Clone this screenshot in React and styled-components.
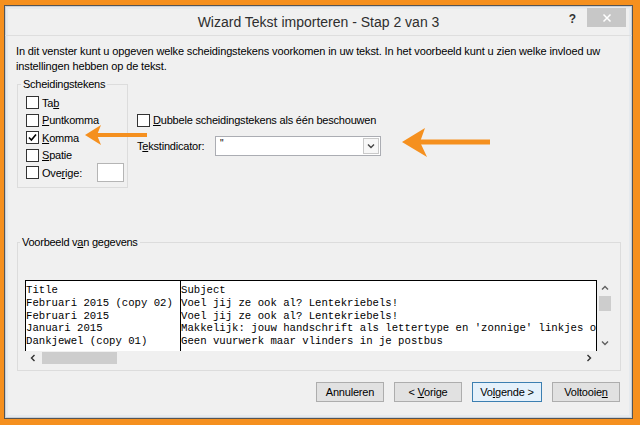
import React from "react";
import styled, { createGlobalStyle } from "styled-components";

// Wizard Tekst importeren - stap 2, scheidingstekens kiezen

const GlobalStyle = createGlobalStyle`
  html, body { margin: 0; padding: 0; }
  body {
    width: 640px;
    height: 425px;
    overflow: hidden;
    background: #f5901f;
    font-family: "Liberation Sans", Arial, sans-serif;
  }
`;

const Frame = styled.div`
  width: 640px;
  height: 425px;
  box-sizing: border-box;
  padding: 5px 7px 6px 4px;
  background: #f5901f;
`;

const Window = styled.div`
  position: relative;
  height: 100%;
  box-sizing: border-box;
  border: 1px solid #555;
  background: #f0f0f0;
  box-shadow: inset 0 0 0 1px #c9d0d8, inset 0 0 0 3px #e6eaee;
  display: flex;
  flex-direction: column;
  font-size: 11px;
  color: #000;
`;

const TitleBar = styled.div`
  height: 29px;
  border-bottom: 1px solid #dedede;
  display: grid;
  grid-template-columns: 1fr auto 1fr;
  align-items: start;
`;

const Title = styled.div`
  grid-column: 2;
  padding-top: 8px;
  font-size: 14px;
  color: #2e2e2e;
  white-space: nowrap;
`;

const TitleControls = styled.div`
  grid-column: 3;
  justify-self: end;
  display: flex;
  align-items: flex-start;
  gap: 11px;
  margin-right: 6px;
`;

const Help = styled.span`
  padding-top: 6px;
  font-size: 12px;
  font-weight: bold;
  color: #333;
`;

const CloseBtn = styled.div`
  width: 39px;
  height: 19px;
  margin-top: 2px;
  background: #c7c7c7;
  display: flex;
  align-items: center;
  justify-content: center;
`;

const Body = styled.div`
  flex: 1;
  padding: 0 12px 0 11px;
  display: flex;
  flex-direction: column;
`;

const Intro = styled.p`
  margin: 8px 0 0;
  line-height: 15px;
  white-space: nowrap;
  letter-spacing: -0.13px;
`;

const TopRow = styled.div`
  display: flex;
  align-items: flex-start;
  margin-top: 3px;
`;

const Group = styled.fieldset`
  margin: 0 0 0 1px;
  box-sizing: border-box;
  width: ${(p) => p.$w}px;
  border: 1px solid #dcdcdc;
  padding: ${(p) => p.$pad};
  min-width: 0;
`;

const Legend = styled.legend`
  margin-left: -5px;
  padding: 0 2px;
  line-height: 14px;
  letter-spacing: -0.25px;
`;

const CheckRow = styled.div`
  height: 17.5px;
  display: flex;
  align-items: center;
  gap: 3px;
  letter-spacing: -0.2px;
  white-space: nowrap;
`;

const Box = styled.span`
  width: 13px;
  height: 13px;
  box-sizing: border-box;
  border: 1px solid #333;
  background: #fff;
  display: inline-flex;
  align-items: center;
  justify-content: center;
  flex: none;
`;

const SmallInput = styled.span`
  width: 27px;
  height: 19px;
  box-sizing: border-box;
  margin-left: 12px;
  border: 1px solid #b5b5b5;
  background: #fff;
  flex: none;
`;

const Middle = styled.div`
  margin-left: 9px;
  padding-top: 34.5px;
  display: flex;
  flex-direction: column;
`;

const IndicatorRow = styled.div`
  margin-top: 6.5px;
  height: 20px;
  display: flex;
  align-items: center;
  letter-spacing: -0.2px;
`;

const IndicatorLabel = styled.span`
  width: 78px;
`;

const Combo = styled.div`
  width: 166px;
  height: 20px;
  box-sizing: border-box;
  border: 1px solid #abadb3;
  background: #fff;
  display: flex;
  align-items: center;
`;

const ComboValue = styled.span`
  flex: 1;
  padding-left: 4px;
  font-size: 10px;
  align-self: flex-start;
  padding-top: 1px;
`;

const ComboBtn = styled.span`
  width: 16px;
  height: 16px;
  margin-right: 1px;
  box-sizing: border-box;
  border: 1px solid #c9c9c9;
  background: #f7f7f7;
  display: flex;
  align-items: center;
  justify-content: center;
`;

const PreviewGroup = styled(Group)`
  margin-top: 47px;
`;

const Preview = styled.div`
  display: grid;
  grid-template-columns: 572px 15px;
  grid-template-rows: 71px 14px;
`;

const Table = styled.div`
  box-sizing: border-box;
  border: 1px solid #000;
  border-bottom: none;
  background: #fff;
  display: flex;
  overflow: hidden;
  font-family: "Liberation Mono", "Courier New", monospace;
  font-size: 10.65px;
  line-height: 12.75px;
`;

const Column = styled.div`
  width: ${(p) => (p.$w ? `${p.$w}px` : "auto")};
  flex: ${(p) => (p.$w ? "none" : "1")};
  border-left: ${(p) => (p.$divider ? "1px solid #000" : "none")};
  padding-top: 3px;
  white-space: pre;
  overflow: hidden;
`;

const VScroll = styled.div`
  display: flex;
  flex-direction: column;
  align-items: center;
`;

const HScroll = styled.div`
  display: flex;
  align-items: center;
`;

const ScrollBtn = styled.span`
  width: ${(p) => (p.$v ? "15px" : "16px")};
  height: ${(p) => (p.$v ? "16px" : "14px")};
  display: flex;
  align-items: center;
  justify-content: center;
  flex: none;
`;

const Thumb = styled.span`
  background: #cdcdcd;
  flex: none;
  width: ${(p) => (p.$v ? "12px" : "75px")};
  height: ${(p) => (p.$v ? "15px" : "12px")};
  margin-left: ${(p) => (p.$v ? "0" : "1px")};
`;

const Spacer = styled.span`
  flex: 1;
`;

const ButtonRow = styled.div`
  margin-top: 11px;
  display: flex;
  justify-content: flex-end;
  gap: 10px;
`;

const Button = styled.div`
  width: ${(p) => (p.$wide ? 70 : 68)}px;
  height: 20px;
  box-sizing: border-box;
  border: 1px solid ${(p) => (p.$focus ? "#3c7fb1" : "#adadad")};
  background: ${(p) => (p.$focus ? "#e5f1fb" : "#e1e1e1")};
  display: flex;
  align-items: center;
  justify-content: center;
  letter-spacing: -0.2px;
  white-space: pre;
`;

const Annotation = styled.svg`
  position: absolute;
  left: ${(p) => p.$x}px;
  top: ${(p) => p.$y}px;
  pointer-events: none;
`;

const ORANGE = "#f5901f";

function Chevron({ dir = "down", color = "#606060" }) {
  const rot = { down: 0, up: 180, left: 90, right: -90 }[dir];
  return (
    <svg width="8" height="8" viewBox="0 0 8 8" style={{ transform: `rotate(${rot}deg)` }}>
      <path d="M1 2.5 L4 5.5 L7 2.5" fill="none" stroke={color} strokeWidth="1.4" />
    </svg>
  );
}

function Check({ checked, children }) {
  return (
    <CheckRow>
      <Box>
        {checked && (
          <svg width="11" height="11" viewBox="0 0 11 11">
            <path d="M2 5.5 L4.4 8 L9 2.5" fill="none" stroke="#000" strokeWidth="1.6" />
          </svg>
        )}
      </Box>
      <span>{children}</span>
    </CheckRow>
  );
}

const rows = [
  ["Title", "Subject"],
  ["Februari 2015 (copy 02)", "Voel jij ze ook al? Lentekriebels!"],
  ["Februari 2015", "Voel jij ze ook al? Lentekriebels!"],
  ["Januari 2015", "Makkelijk: jouw handschrift als lettertype en 'zonnige' linkjes o"],
  ["Dankjewel (copy 01)", "Geen vuurwerk maar vlinders in je postbus"],
];

export default function App() {
  return (
    <>
      <GlobalStyle />
      <Frame>
        <Window>
          <TitleBar>
            <Title>Wizard Tekst importeren - Stap 2 van 3</Title>
            <TitleControls>
              <Help>?</Help>
              <CloseBtn>
                <svg width="10" height="10" viewBox="0 0 10 10">
                  <path d="M1.5 1.5 L8.5 8.5 M8.5 1.5 L1.5 8.5" stroke="#fff" strokeWidth="1.5" />
                </svg>
              </CloseBtn>
            </TitleControls>
          </TitleBar>

          <Body>
            <Intro>
              In dit venster kunt u opgeven welke scheidingstekens voorkomen in uw tekst. In het voorbeeld kunt u zien welke invloed uw
              <br />
              instellingen hebben op de tekst.
            </Intro>

            <TopRow>
              <Group $w={111} $pad="3px 6px 5.5px 8px">
                <Legend>Scheidingstekens</Legend>
                <Check>Ta<u>b</u></Check>
                <Check><u>P</u>untkomma</Check>
                <Check checked><u>K</u>omma</Check>
                <Check><u>S</u>patie</Check>
                <CheckRow>
                  <Box />
                  <span>Ove<u>r</u>ige:</span>
                  <SmallInput />
                </CheckRow>
              </Group>

              <Middle>
                <Check><u>D</u>ubbele scheidingstekens als één beschouwen</Check>
                <IndicatorRow>
                  <IndicatorLabel>T<u>e</u>kstindicator:</IndicatorLabel>
                  <Combo>
                    <ComboValue>"</ComboValue>
                    <ComboBtn>
                      <Chevron dir="down" color="#444" />
                    </ComboBtn>
                  </Combo>
                </IndicatorRow>
              </Middle>
            </TopRow>

            <PreviewGroup $w={604} $pad="31px 7px 5px 7px">
              <Legend>Voorbeeld v<u>a</u>n gegevens</Legend>
              <Preview>
                <Table>
                  <Column $w={154}>{rows.map((r) => r[0]).join("\n")}</Column>
                  <Column $divider>{rows.map((r) => r[1]).join("\n")}</Column>
                </Table>
                <VScroll>
                  <ScrollBtn $v><Chevron dir="up" /></ScrollBtn>
                  <Thumb $v />
                  <Spacer />
                  <ScrollBtn $v><Chevron dir="down" /></ScrollBtn>
                </VScroll>
                <HScroll>
                  <ScrollBtn><Chevron dir="left" color="#333" /></ScrollBtn>
                  <Thumb />
                  <Spacer />
                  <ScrollBtn><Chevron dir="right" color="#333" /></ScrollBtn>
                </HScroll>
              </Preview>
            </PreviewGroup>

            <ButtonRow>
              <Button><span>Annuleren</span></Button>
              <Button><span>&lt; <u>V</u>orige</span></Button>
              <Button $wide $focus><span>Vo<u>l</u>gende &gt;</span></Button>
              <Button><span>Voltooie<u>n</u></span></Button>
            </ButtonRow>
          </Body>

          <Annotation $x={80} $y={118} width="62" height="22" viewBox="0 0 62 22">
            <path d="M0 11 L16 1 L12 11 L16 21 Z" fill={ORANGE} />
            <rect x="11" y="9" width="51" height="4" fill={ORANGE} />
          </Annotation>
          <Annotation $x={396} $y={121} width="90" height="31" viewBox="0 0 90 31">
            <path d="M1 15 L24 1 L19 15 L26 30 Z" fill={ORANGE} />
            <rect x="18" y="12.5" width="71" height="5" fill={ORANGE} />
          </Annotation>
        </Window>
      </Frame>
    </>
  );
}
